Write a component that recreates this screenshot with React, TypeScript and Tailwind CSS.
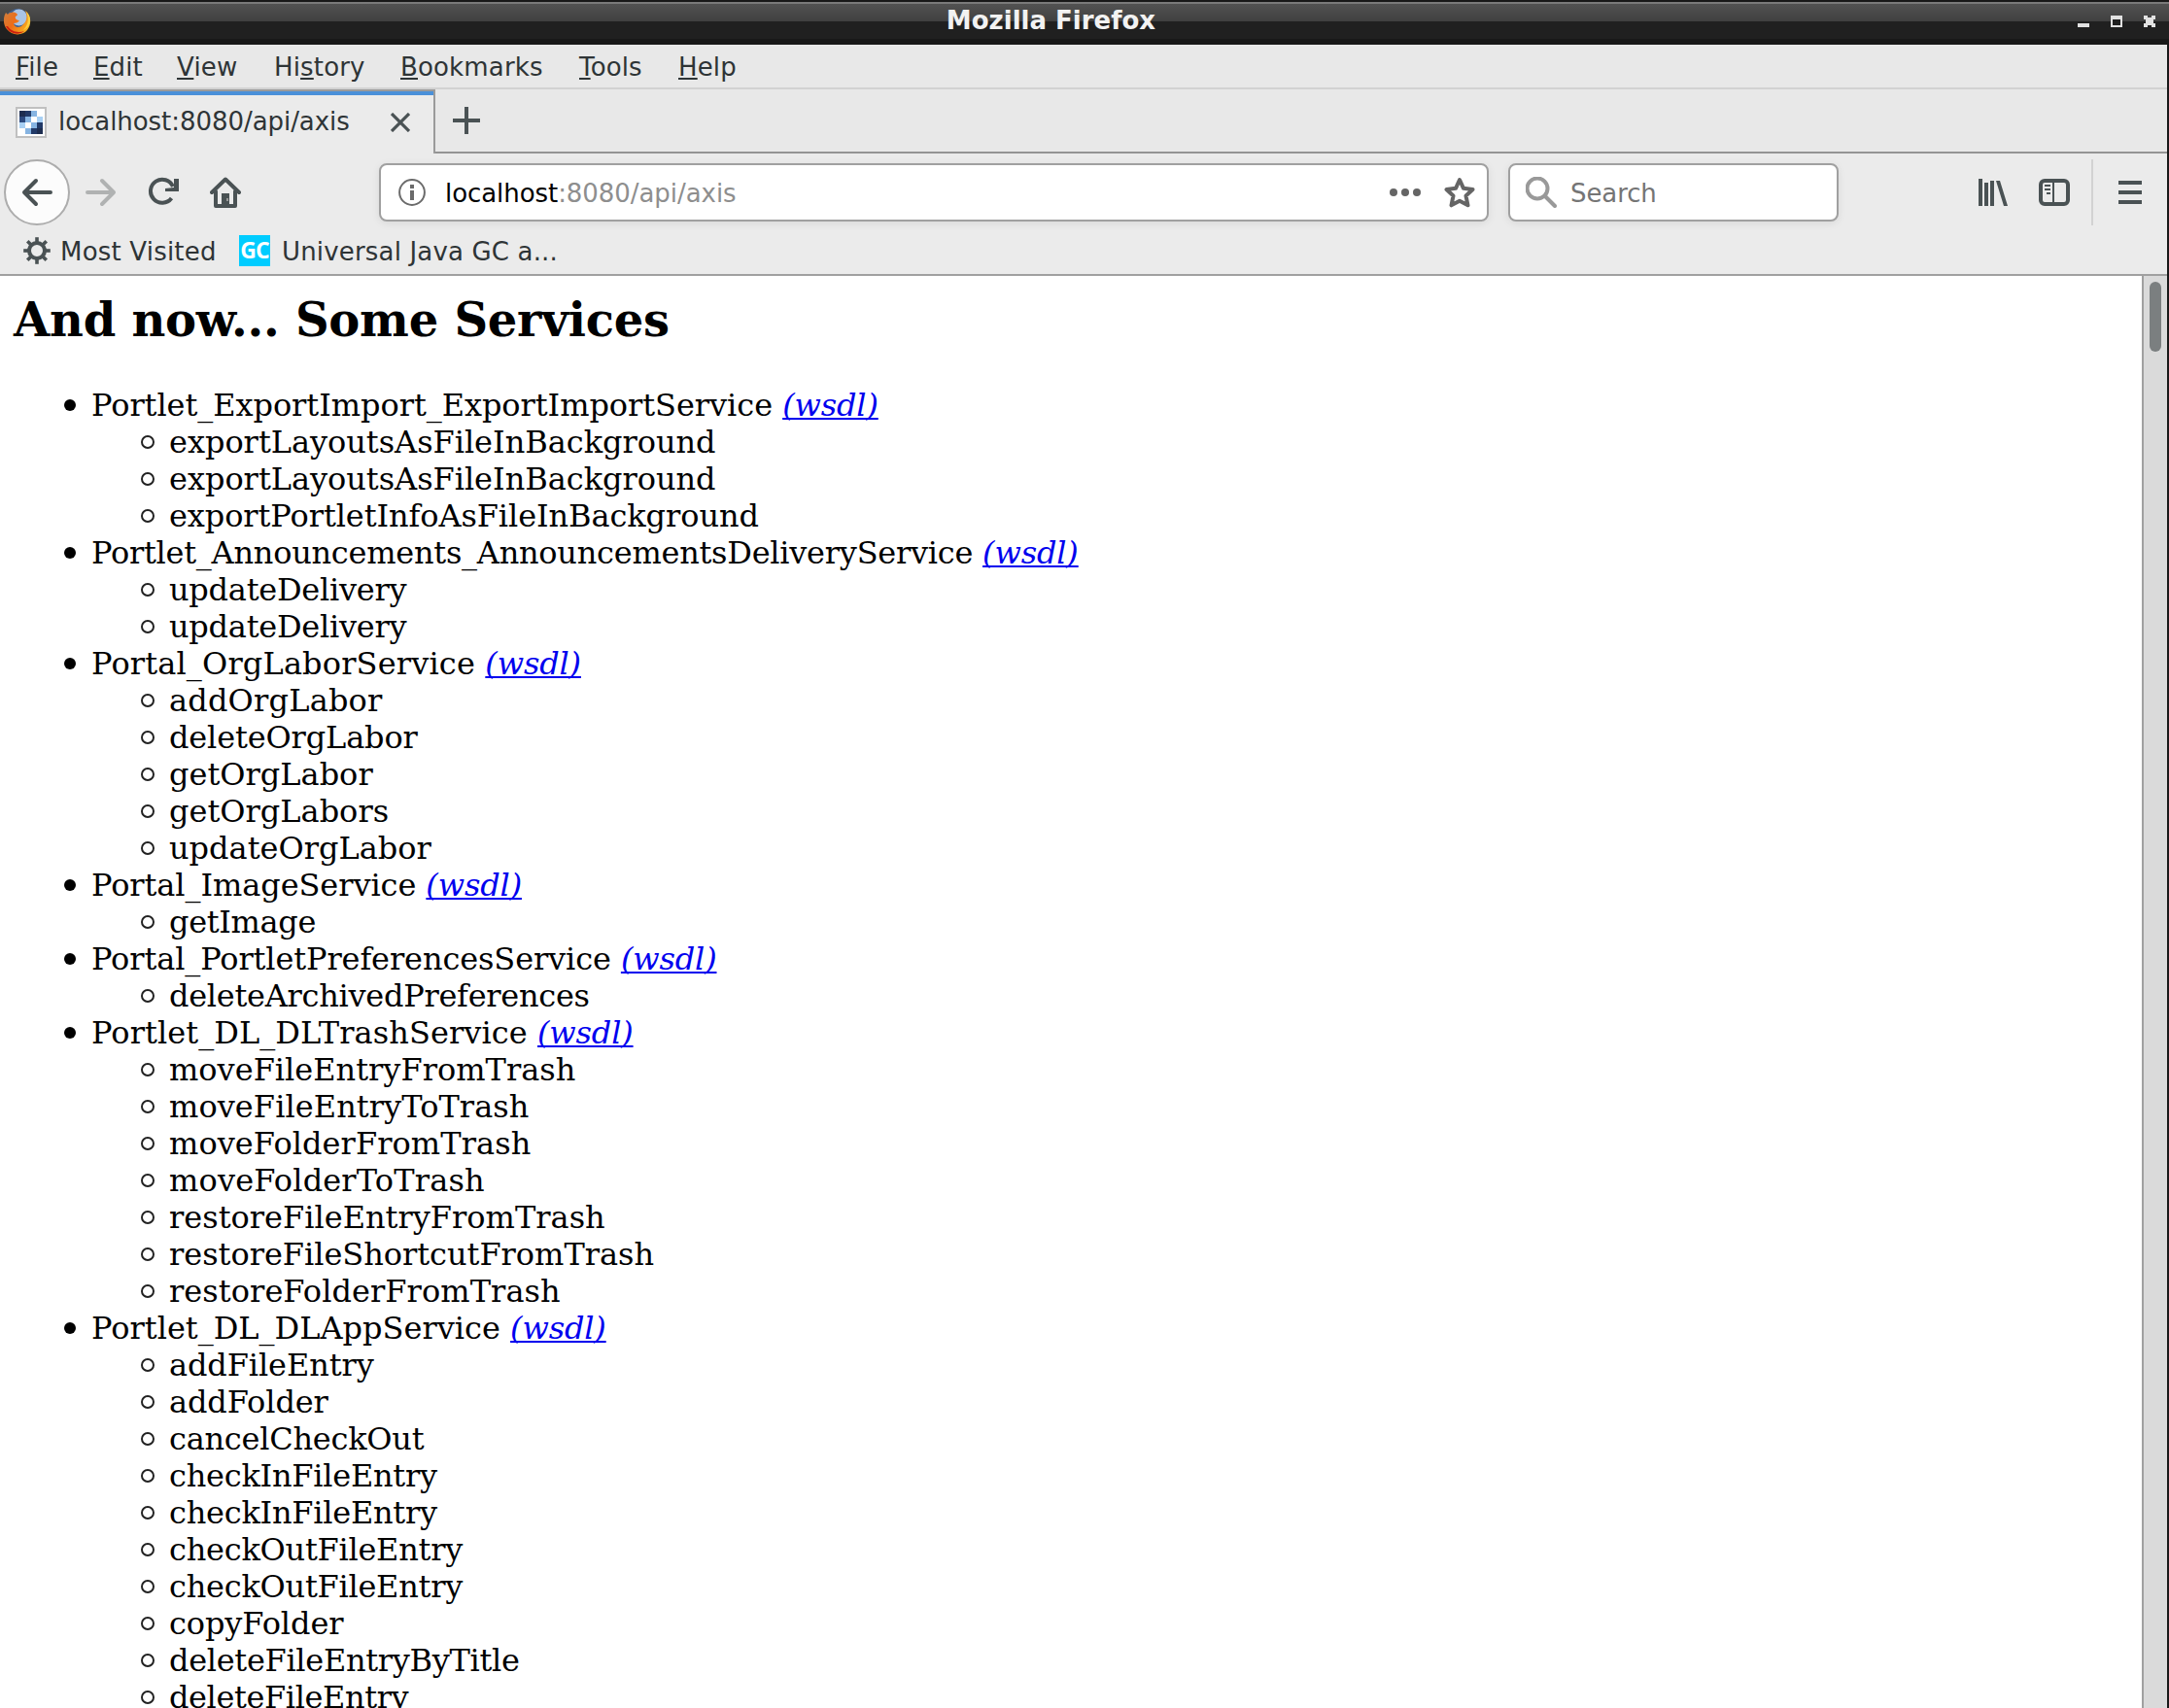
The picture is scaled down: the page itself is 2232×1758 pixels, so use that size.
import React from 'react';

const INK = '#4a5254';

const menus = [
  { pre: '', key: 'F', post: 'ile', w: 'w-[80px]' },
  { pre: '', key: 'E', post: 'dit', w: 'w-[86px]' },
  { pre: '', key: 'V', post: 'iew', w: 'w-[100px]' },
  { pre: 'Hi', key: 's', post: 'tory', w: 'w-[130px]' },
  { pre: '', key: 'B', post: 'ookmarks', w: 'w-[184px]' },
  { pre: '', key: 'T', post: 'ools', w: 'w-[102px]' },
  { pre: '', key: 'H', post: 'elp', w: 'w-[80px]' },
];

// Each label carries its letter spacing in pixels.
type Label = [text: string, spacing: number];

const services: { name: Label; ops: Label[] }[] = [
  {
    name: ['Portlet_ExportImport_ExportImportService', -0.06],
    ops: [
      ['exportLayoutsAsFileInBackground', -0.03],
      ['exportLayoutsAsFileInBackground', -0.03],
      ['exportPortletInfoAsFileInBackground', -0.09],
    ],
  },
  {
    name: ['Portlet_Announcements_AnnouncementsDeliveryService', -0.26],
    ops: [
      ['updateDelivery', -0.25],
      ['updateDelivery', -0.25],
    ],
  },
  {
    name: ['Portal_OrgLaborService', 0.15],
    ops: [
      ['addOrgLabor', 0.19],
      ['deleteOrgLabor', -0.15],
      ['getOrgLabor', 0],
      ['getOrgLabors', 0],
      ['updateOrgLabor', 0],
    ],
  },
  { name: ['Portal_ImageService', -0.08], ops: [['getImage', -0.35]] },
  { name: ['Portal_PortletPreferencesService', -0.12], ops: [['deleteArchivedPreferences', -0.28]] },
  {
    name: ['Portlet_DL_DLTrashService', 0.07],
    ops: [
      ['moveFileEntryFromTrash', 0],
      ['moveFileEntryToTrash', 0.06],
      ['moveFolderFromTrash', 0.06],
      ['moveFolderToTrash', 0.15],
      ['restoreFileEntryFromTrash', 0],
      ['restoreFileShortcutFromTrash', -0.03],
      ['restoreFolderFromTrash', 0.05],
    ],
  },
  {
    name: ['Portlet_DL_DLAppService', 0],
    ops: [
      ['addFileEntry', -0.1],
      ['addFolder', -0.1],
      ['cancelCheckOut', -0.25],
      ['checkInFileEntry', -0.25],
      ['checkInFileEntry', -0.25],
      ['checkOutFileEntry', -0.25],
      ['checkOutFileEntry', -0.25],
      ['copyFolder', -0.1],
      ['deleteFileEntryByTitle', -0.31],
      ['deleteFileEntry', -0.4],
    ],
  },
];

function FirefoxLogo() {
  return (
    <svg className="ml-1 mt-1.5 h-7 w-7" viewBox="0 0 28 28">
      <defs>
        <linearGradient id="fox" x1="0" y1="0" x2="1" y2="0.6">
          <stop offset="0" stopColor="#cf8040" />
          <stop offset="0.5" stopColor="#ee6c18" />
          <stop offset="1" stopColor="#f8b020" />
        </linearGradient>
      </defs>
      <circle cx="14" cy="13" r="12" fill="#40608f" />
      <circle cx="15.500" cy="10" r="8.500" fill="#a9c4e6" />
      <path d="M2 5C-1 10-1 17 3 22c5 7 16 7 21 1 5-6 4-15-2-20 3 6 1 12-2 14-3 4-9 4-10-1 3 0 5-1 6-3-3 0-5-2-4-4 1-1 2-1 2-2-1-2-4-3-6-2C7 5 5 5 4 7z" fill="url(#fox)" />
      <path d="M2 19c4 8 13 10 19 5-6 2-13 1-17-5z" fill="#cc2010" />
      <path d="M22 3c4 6 4 14-2 20 8-3 10-14 2-20z" fill="#fbd040" />
    </svg>
  );
}

const favCells = [
  '#1d2d50', '#223a68', '#86b4e2', '#ffffff',
  '#2c4a80', '#86b4e2', '#ffffff', '#a8d0f4',
  '#a8d0f4', '#ffffff', '#86b4e2', '#223a68',
  '#ffffff', '#86b4e2', '#223a68', '#1d2d50',
];

function Favicon() {
  return (
    <span className="grid h-8 w-8 shrink-0 grid-cols-4 grid-rows-4 border-2 border-[#c0c0c0] bg-white p-[2px]">
      {favCells.map((c, i) => (
        <span key={i} style={{ backgroundColor: c }} />
      ))}
    </span>
  );
}

function Gear() {
  return (
    <svg className="h-7 w-7" viewBox="0 0 28 28" fill="none" stroke={INK}>
      <circle cx="14" cy="14" r="8" strokeWidth="4" />
      {[0, 45, 90, 135, 180, 225, 270, 315].map((a) => (
        <path key={a} d="M14 0.200v5" strokeWidth="3.6" transform={`rotate(${a} 14 14)`} />
      ))}
    </svg>
  );
}

export default function App() {
  return (
    <div className="flex h-[1758px] w-[2232px] flex-col overflow-hidden bg-[#181818] font-['DejaVu_Sans',sans-serif] text-[26px] text-[#2e3436]">
      <header className="flex h-[46px] shrink-0 items-start border-t-2 border-[#181818] bg-[linear-gradient(#7a7a7a_0_2px,#525252_2px,#404040_20px,#202020_20px_38px,#181818_38px)]">
        <FirefoxLogo />
        <div className="flex-1 pr-[7px] pt-1 text-center text-[26px] font-bold leading-[30px] text-[#f2f2f2]">
          Mozilla Firefox
        </div>
        <svg className="mr-[12px] mt-[14px] h-3 w-[82px]" viewBox="0 0 82 12" fill="#e2e2e2" shapeRendering="crispEdges">
          <path d="M0 8h12v4H0zM34 0h12v12H34zM68 0h4v2h4V0h4v4h-2v4h2v4h-4v-2h-4v2h-4V8h2V4h-2z" />
          <path d="M36 4h8v6h-8z" fill="#202020" />
        </svg>
      </header>

      <div className="mr-[2px] flex min-h-0 flex-1 flex-col bg-[#ebebeb]">
        <nav className="flex h-[46px] shrink-0 items-center border-b-2 border-[#d2d2d2] bg-[#e8e8e8] pl-4 pt-[2px] tracking-[0.15px]">
          {menus.map((m) => (
            <span key={m.key + m.post} className={m.w}>
              {m.pre}
              <span className="underline decoration-[#2e3436] decoration-2 underline-offset-[2px]">{m.key}</span>
              {m.post}
            </span>
          ))}
        </nav>

        <div className="flex h-[66px] shrink-0 bg-[#e8e8e8]">
          <div className="flex w-[448px] border-r-2 border-t-2 border-[#9b9b9b] bg-[#ebebeb]">
            <div className="flex w-full items-center border-t-4 border-[#4a90d9] pb-1 pl-4">
              <Favicon />
              <span className="ml-3 w-[328px] pb-[1px] tracking-[-0.05px]">localhost:8080/api/axis</span>
              <svg className="ml-[14px] h-5 w-5" viewBox="0 0 20 20" stroke={INK} strokeWidth="3.2" fill="none">
                <path d="M1 1l18 18M19 1L1 19" />
              </svg>
            </div>
          </div>
          <div className="flex-1 border-b-2 border-[#949494] pl-[18px] pt-[18px]">
            <svg className="h-7 w-7" viewBox="0 0 28 28" stroke={INK} strokeWidth="4" fill="none">
              <path d="M14 0v28M0 14h28" />
            </svg>
          </div>
        </div>

        <div className="flex h-[80px] shrink-0 items-center">
          <span className="ml-1 flex h-[68px] w-[68px] items-center justify-center rounded-full border-2 border-[#adadad] bg-[#fcfcfc]">
            <svg className="h-8 w-8" viewBox="0 0 32 32" fill="none" stroke={INK} strokeWidth="4" strokeLinecap="round" strokeLinejoin="round">
              <path d="M30 16H3M15 4L3 16l12 12" />
            </svg>
          </span>
          <svg className="ml-4 h-8 w-8" viewBox="0 0 32 32" fill="none" stroke="#b0b2b2" strokeWidth="4" strokeLinecap="round" strokeLinejoin="round">
            <path d="M2 16h27M17 4l12 12-12 12" />
          </svg>
          <svg className="ml-[32px] h-8 w-8" viewBox="0 0 32 32" fill="none" stroke={INK} strokeWidth="4">
            <path d="M24.500 22A12 12 0 1 1 26 10" />
            <path d="M32 2v13H18v-3l9-1V2z" fill={INK} stroke="none" />
          </svg>
          <svg className="ml-[32px] h-8 w-8" viewBox="0 0 32 32" fill="none" stroke={INK} strokeWidth="4" strokeLinejoin="round" strokeLinecap="round">
            <path d="M2 16L16 2.500 30 16M6 15v15h20V15" />
            <path d="M12 31V17h8v14z" fill={INK} stroke="none" />
            <path d="M17 22h2v3h-2z" fill="#999" stroke="none" />
          </svg>

          <div className="ml-[142px] flex h-[60px] w-[1142px] items-center rounded-lg border-2 border-[#a0a0a0] bg-white shadow-[0_2px_8px_rgba(0,0,0,0.08)]">
            <svg className="ml-[18px] h-7 w-7" viewBox="0 0 28 28" fill="none" stroke="#6b6b6b">
              <circle cx="14" cy="14" r="12.900" strokeWidth="2" />
              <path d="M14 6v4M14 12v10" strokeWidth="4" />
            </svg>
            <span className="ml-5 flex-1 pt-[2px] tracking-[-0.06px] text-[#8e8e8e]">
              <span className="text-black">localhost</span>:8080/api/axis
            </span>
            <svg className="h-8 w-8" viewBox="0 0 32 32" fill="#656565">
              <circle cx="4" cy="16" r="4" />
              <circle cx="16" cy="16" r="4" />
              <circle cx="28" cy="16" r="4" />
            </svg>
            <svg className="ml-[24px] mr-[12px] h-8 w-8" viewBox="0 0 32 32" fill="none" stroke="#656565" strokeWidth="4" strokeLinejoin="round">
              <path d="M16 3l4 8.800 9.500 1.200-7 6.500 2 9.800L16 24.800l-8.500 4.500 2-9.800-7-6.500L12 11.800z" />
            </svg>
          </div>

          <div className="ml-5 flex h-[60px] w-[340px] items-center rounded-lg border-2 border-[#a0a0a0] bg-white text-[#757575] shadow-[0_2px_8px_rgba(0,0,0,0.08)]">
            <svg className="ml-4 h-8 w-8" viewBox="0 0 32 32" fill="none" stroke="#999" strokeWidth="4" strokeLinecap="round">
              <circle cx="12" cy="12" r="10.500" />
              <path d="M20 20l10 10" />
            </svg>
            <span className="ml-[14px] pt-[2px] tracking-[-0.1px]">Search</span>
          </div>

          <svg className="ml-auto h-7 w-[30px]" viewBox="0 0 30 28" fill={INK}>
            <path d="M0 0h4v28H0zM6 4h4v24H6zM12 2h4v26h-4zM18 2h4l8 26h-4z" />
          </svg>
          <svg className="ml-8 h-7 w-8" viewBox="0 0 32 28" fill="none" stroke={INK}>
            <rect x="2" y="2" width="28" height="24" rx="4" strokeWidth="4" />
            <path d="M15 3v22M6 7h6M6 11h6M8 15h4" strokeWidth="2" />
          </svg>
          <span className="ml-[22px] h-[68px] w-[2px] bg-[#d2d2d2]" />
          <svg className="ml-[26px] mr-[26px] h-6 w-6" viewBox="0 0 24 24" fill={INK}>
            <path d="M0 0h24v4H0zM0 10h24v4H0zM0 20h24v4H0z" />
          </svg>
        </div>

        <div className="flex h-[46px] shrink-0 items-center border-b-2 border-[#a0a0a0] pb-1 pl-6">
          <Gear />
          <span className="ml-[10px] w-[174px] pt-[2px] tracking-[0.2px]">Most Visited</span>
          <span className="ml-[10px] flex h-8 w-8 items-center justify-center bg-[#0cf] pb-[2px] font-['Open_Sans',sans-serif] text-[23px] font-bold tracking-[-1px] text-white">
            GC
          </span>
          <span className="ml-[12px] pt-[2px] tracking-[0.17px]">Universal Java GC a...</span>
        </div>

        <div className="flex min-h-0 flex-1">
          <main className="h-full flex-1 overflow-hidden bg-white pl-[14px] font-['DejaVu_Serif',serif] text-[32px] leading-[38px] text-black">
            <h2 className="mt-4 text-[48px] font-bold leading-[58px] tracking-[-0.25px]">And now... Some Services</h2>
            <ul className="mt-10 pl-[80px]">
              {services.map(({ name, ops }) => (
                <li key={name[0]}>
                  <div className="flex items-center whitespace-pre">
                    <span className="-ml-[28px] mr-[16px] h-3 w-3 rounded-full bg-black" />
                    <span style={{ letterSpacing: name[1] }}>{name[0]} </span>
                    <a className="italic tracking-[-0.15px] text-[#0000ee] underline decoration-2 underline-offset-[2px] [text-decoration-skip-ink:none]">
                      (wsdl)
                    </a>
                  </div>
                  <ul className="pl-[80px]">
                    {ops.map(([op, spacing], i) => (
                      <li key={i} className="flex items-center">
                        <span className="-ml-[29px] mr-[15px] h-[14px] w-[14px] rounded-full border-2 border-[#222]" />
                        <span style={{ letterSpacing: spacing }}>{op}</span>
                      </li>
                    ))}
                  </ul>
                </li>
              ))}
            </ul>
          </main>
          <div className="w-[26px] border-l-2 border-[#a0a0a0] bg-[#dadada] pl-[6px] pt-[6px]">
            <div className="h-[72px] w-3 rounded-full bg-[#7b7f80]" />
          </div>
        </div>
      </div>
    </div>
  );
}
